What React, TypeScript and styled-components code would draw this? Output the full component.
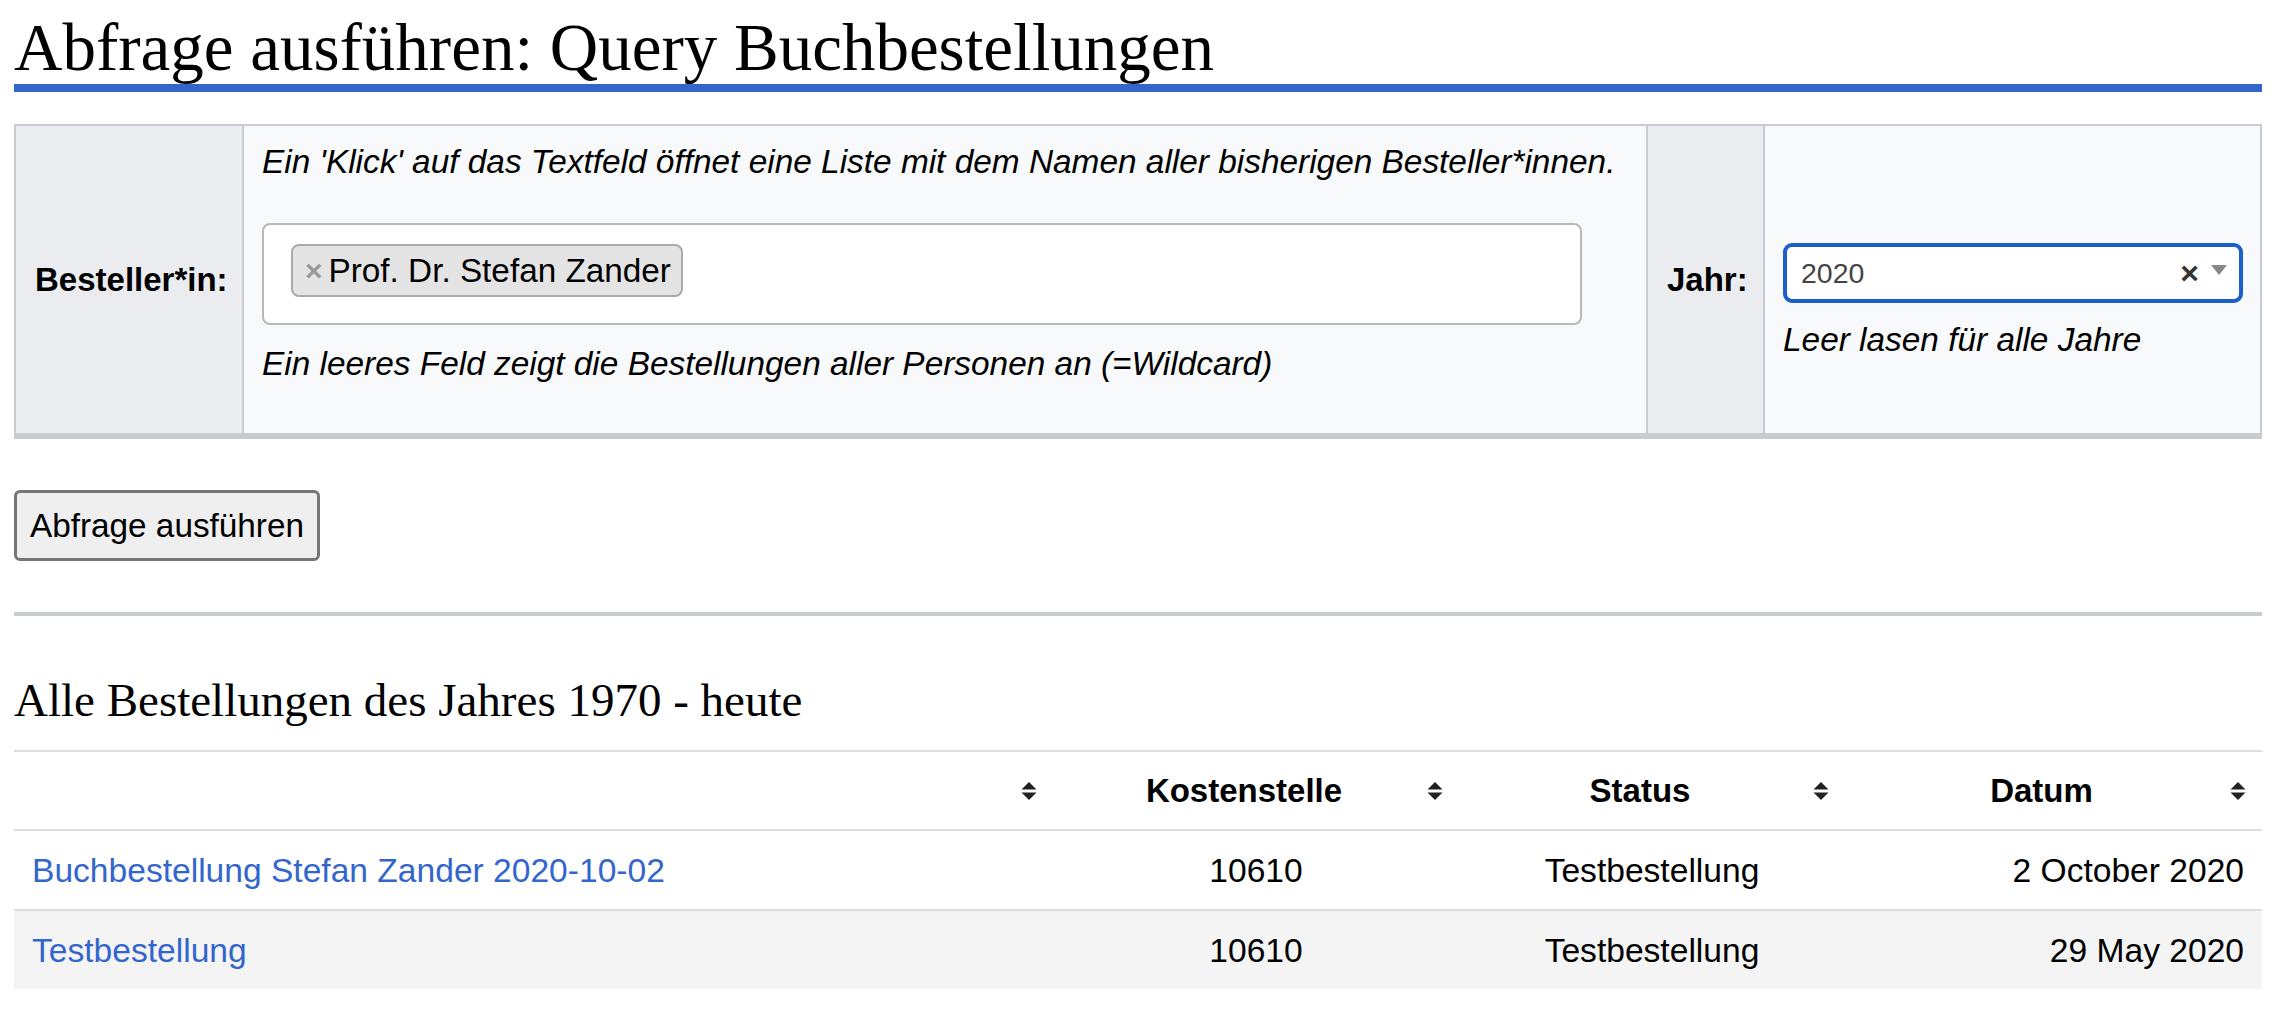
import styled, { createGlobalStyle } from 'styled-components'

const GlobalStyle = createGlobalStyle`
	*, *::before, *::after {
		box-sizing: border-box;
	}
	html, body {
		margin: 0;
		padding: 0;
		background: #fff;
	}
	body {
		font-family: 'Liberation Sans', Arial, sans-serif;
		color: #000;
	}
`

type Order = {
	title: string
	costCenter: string
	status: string
	date: string
}

const orders: Order[] = [
	{
		title: 'Buchbestellung Stefan Zander 2020-10-02',
		costCenter: '10610',
		status: 'Testbestellung',
		date: '2 October 2020',
	},
	{
		title: 'Testbestellung',
		costCenter: '10610',
		status: 'Testbestellung',
		date: '29 May 2020',
	},
]

const columns = ['', 'Kostenstelle', 'Status', 'Datum']

function SortArrows() {
	return (
		<SortIcon width="16" height="20" viewBox="0 0 16 20" aria-hidden="true">
			<polygon points="8,1 15.5,8.5 0.5,8.5" fill="#222" />
			<polygon points="0.5,11.5 15.5,11.5 8,19" fill="#222" />
		</SortIcon>
	)
}

export default function App() {
	return (
		<Page>
			<GlobalStyle />
			<Title>Abfrage ausführen: Query Buchbestellungen</Title>

			<FormGrid>
				<LabelCell>Besteller*in:</LabelCell>
				<FieldCell $padding="17px 18px 51px 18px">
					<Hint>
						Ein 'Klick' auf das Textfeld öffnet eine Liste mit dem Namen aller bisherigen
						Besteller*innen.
					</Hint>
					<TagBox>
						<Tag>
							<TagRemove>×</TagRemove>
							Prof. Dr. Stefan Zander
						</Tag>
					</TagBox>
					<Hint $gap={20}>Ein leeres Feld zeigt die Bestellungen aller Personen an (=Wildcard)</Hint>
				</FieldCell>
				<LabelCell>Jahr:</LabelCell>
				<FieldCell $padding="117px 17px 0 18px" $last>
					<Select>
						<SelectValue>2020</SelectValue>
						<SelectClear>×</SelectClear>
						<SelectArrow />
					</Select>
					<Hint $gap={18}>Leer lasen für alle Jahre</Hint>
				</FieldCell>
			</FormGrid>

			<SubmitButton type="button">Abfrage ausführen</SubmitButton>

			<Divider />

			<SubTitle>Alle Bestellungen des Jahres 1970 - heute</SubTitle>

			<Table>
				<Row>
					{columns.map((c, i) => (
						<HeadCell key={i}>
							{c}
							<SortArrows />
						</HeadCell>
					))}
				</Row>
				{orders.map((o, i) => (
					<Row key={o.title} $striped={i % 2 === 1}>
						<Cell $align="left">
							<Link href="#">{o.title}</Link>
						</Cell>
						<Cell $align="center">{o.costCenter}</Cell>
						<Cell $align="center">{o.status}</Cell>
						<Cell $align="right">{o.date}</Cell>
					</Row>
				))}
			</Table>
		</Page>
	)
}

const Page = styled.div`
	padding: 10px 30px 40px 14px;
`
const Title = styled.h1`
	margin: 0;
	font-family: 'Liberation Serif', 'Times New Roman', serif;
	font-weight: 400;
	font-size: 67px;
	line-height: 74px;
	border-bottom: 8px solid #3366cc;
`
const FormGrid = styled.div`
	margin-top: 32px;
	display: grid;
	grid-template-columns: 228px 1fr 117px 495px;
	border: 2px solid #c8ccd1;
	border-bottom-width: 6px;
`
const LabelCell = styled.div`
	display: flex;
	align-items: center;
	padding: 0 18px 0 19px;
	background: #eaecf0;
	border-right: 2px solid #c8ccd1;
	font-size: 33px;
	font-weight: 700;
`
const FieldCell = styled.div<{ $padding: string; $last?: boolean }>`
	padding: ${(p) => p.$padding};
	background: #f8f9fa;
	border-right: ${(p) => (p.$last ? 'none' : '2px solid #c8ccd1')};
`
const Hint = styled.p<{ $gap?: number }>`
	margin: ${(p) => p.$gap ?? 0}px 0 0;
	font-size: 33.4px;
	font-style: italic;
	line-height: 37px;
`
const TagBox = styled.div`
	margin-top: 43px;
	width: 1320px;
	height: 102px;
	padding: 19px 27px;
	background: #fff;
	border: 2px solid #b8b8b8;
	border-radius: 8px;
`
const Tag = styled.span`
	display: inline-flex;
	align-items: center;
	height: 53px;
	padding: 0 10px 0 12px;
	background: #e4e4e4;
	border: 2px solid #aaa;
	border-radius: 8px;
	font-size: 33.3px;
`
const TagRemove = styled.span`
	margin-right: 6px;
	color: #999;
	font-size: 30px;
	font-weight: 700;
`
const Select = styled.div`
	display: flex;
	align-items: center;
	height: 60px;
	padding: 0 12px 0 14px;
	background: #fff;
	border: 4px solid #1b5fc9;
	border-radius: 9px;
	font-size: 28.5px;
	color: #444;
`
const SelectValue = styled.span`
	flex: 1;
`
const SelectClear = styled.span`
	margin-right: 12px;
	color: #333;
	font-size: 32px;
	font-weight: 700;
	line-height: 1;
`
const SelectArrow = styled.span`
	width: 0;
	height: 0;
	margin-top: -6px;
	border-left: 8px solid transparent;
	border-right: 8px solid transparent;
	border-top: 10px solid #888;
`
const SubmitButton = styled.button`
	display: block;
	margin-top: 51px;
	height: 71px;
	padding: 0 13px;
	background: #efefef;
	border: 3px solid #767676;
	border-radius: 6px;
	font-family: inherit;
	font-size: 33.3px;
	color: #000;
`
const Divider = styled.hr`
	margin: 51px 0 0;
	height: 4px;
	border: 0;
	background: #c8ccd1;
`
const SubTitle = styled.h2`
	margin: 57px 0 0;
	font-family: 'Liberation Serif', 'Times New Roman', serif;
	font-weight: 400;
	font-size: 47px;
	line-height: 54px;
`
const Table = styled.div`
	margin-top: 23px;
`
const Row = styled.div<{ $striped?: boolean }>`
	display: grid;
	grid-template-columns: 1039px 406px 386px 1fr;
	border-top: 2px solid #ddd;
	background: ${(p) => (p.$striped ? '#f4f4f4' : '#fff')};
`
const HeadCell = styled.div`
	position: relative;
	min-height: 77px;
	padding: 20px 44px 20px 20px;
	font-size: 33px;
	font-weight: 700;
	line-height: 37px;
	text-align: center;
`
const SortIcon = styled.svg`
	position: absolute;
	right: 16px;
	top: 50%;
	transform: translateY(-50%);
`
const Cell = styled.div<{ $align: 'left' | 'center' | 'right' }>`
	padding: 21px 18px 20px;
	font-size: 33.6px;
	line-height: 37px;
	text-align: ${(p) => p.$align};
`
const Link = styled.a`
	color: #3366cc;
	text-decoration: none;
`
